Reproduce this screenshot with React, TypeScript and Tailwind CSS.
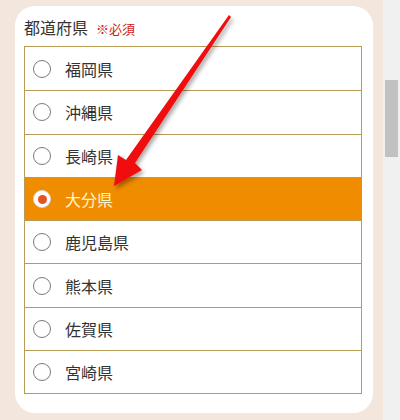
const prefectures = ['福岡県', '沖縄県', '長崎県', '大分県', '鹿児島県', '熊本県', '佐賀県', '宮崎県']

function Radio({ checked }: { checked: boolean }) {
  if (checked) {
    return (
      <span className="flex h-[18px] w-[18px] shrink-0 items-center justify-center rounded-full border border-[#d9d9d9] bg-white">
        <span className="h-[9px] w-[9px] rounded-full bg-[#e4541c]" />
      </span>
    )
  }
  return <span className="h-[18px] w-[18px] shrink-0 rounded-full border border-[#7a7a7a] bg-white" />
}

export default function App() {
  const selected = '大分県'
  return (
    <div
      className="relative flex h-[420px] w-[400px] overflow-hidden"
      style={{ fontFamily: '"Noto Sans CJK JP", "Noto Sans", sans-serif' }}
    >
      <div className="flex-1 bg-[#f3e6dd] pl-[15px] pt-[6px]">
        <div className="h-[407px] w-[358px] rounded-[20px] bg-white pl-[9px] pr-[11px] pt-[9px]">
          <div className="flex h-[24px] items-baseline gap-[8px] leading-[24px]">
            <span className="text-[16px] text-[#333]">都道府県</span>
            <span className="text-[13px] text-[#d01818]">※必須</span>
          </div>
          <div className="mt-[7px] border border-[#b89b55]">
            {prefectures.map((name, i) => {
              const on = name === selected
              return (
                <div
                  key={name}
                  className={`flex h-[43.3px] items-center gap-[14px] pl-[8px] ${i > 0 ? 'border-t border-[#b89b55]' : ''} ${on ? 'bg-[#ef8c00]' : 'bg-white'}`}
                >
                  <Radio checked={on} />
                  <span className={`text-[16px] ${on ? 'text-[#fff4c8]' : 'text-[#333]'}`}>{name}</span>
                </div>
              )
            })}
          </div>
        </div>
      </div>
      <div className="w-[17px] bg-[#f0f0f0] pt-[80px]">
        <div className="mx-[2px] h-[77px] bg-[#c1c1c1]" />
      </div>

      <svg className="pointer-events-none absolute left-0 top-0" width="400" height="420" viewBox="0 0 400 420">
        <defs>
          <filter id="sh" x="-20%" y="-20%" width="140%" height="140%">
            <feDropShadow dx="2" dy="3" stdDeviation="2" floodColor="#000" floodOpacity="0.35" />
          </filter>
        </defs>
        <path
          d="M229 15 L231 17 L135 163 L142 170 L114 186 L118 155 L126 160 Z"
          fill="#f00a0a"
          filter="url(#sh)"
        />
      </svg>
    </div>
  )
}
